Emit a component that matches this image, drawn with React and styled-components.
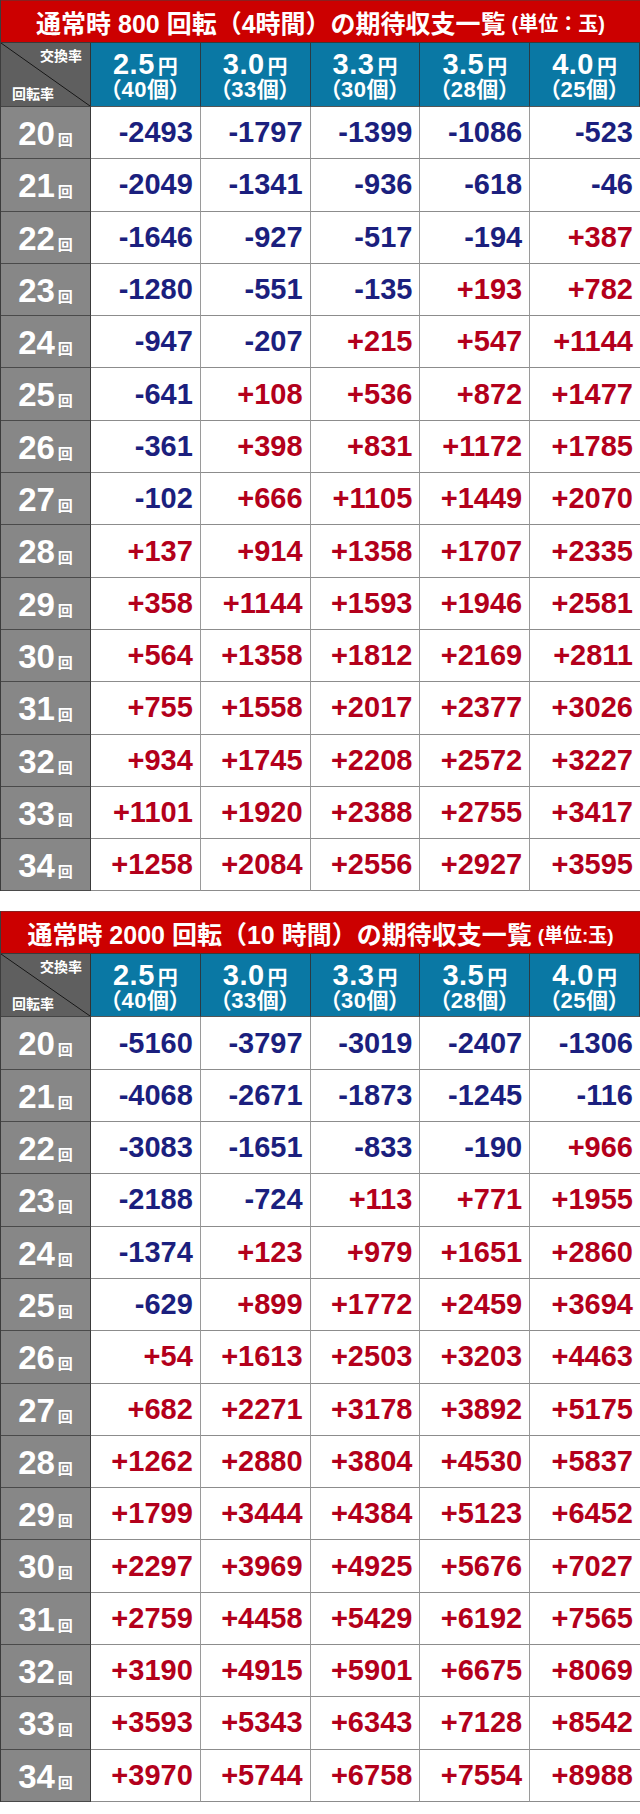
import React from "react";
import styled, { createGlobalStyle } from "styled-components";

const Global = createGlobalStyle`
  html, body { margin: 0; padding: 0; background: #ffffff; }
  body { font-family: "Liberation Sans", "Noto Sans CJK JP", sans-serif; }
  * { box-sizing: border-box; }
`;

const Page = styled.div`
  width: 640px;
  display: flex;
  flex-direction: column;
  gap: 20px;
  padding-bottom: 12px;
`;

const Block = styled.section`
  display: flex;
  flex-direction: column;
  border-left: 1px solid #3c3c3c;
`;

const Title = styled.div`
  height: 43px;
  background: #cc0000;
  border-top: 1px solid #8a2020;
  border-bottom: 1px solid #3a3a3a;
  display: flex;
  align-items: center;
  justify-content: center;
  padding-top: 1px;
  color: #ffffff;
  font-family: "Liberation Sans", "Noto Sans CJK JP", sans-serif;
  font-weight: 700;
  white-space: nowrap;
`;

const TitleMain = styled.span`
  font-size: 25px;
`;

const TitleUnit = styled.span`
  font-size: ${(p) => (p.$small ? 19 : 20)}px;
  margin-left: 6px;
`;

const Grid = styled.div`
  display: grid;
  grid-template-columns: 90px repeat(5, 1fr);
  grid-template-rows: ${(p) => p.$head}px;
  grid-auto-rows: 52.3px;
`;

const Corner = styled.div`
  background: linear-gradient(
    to top right,
    #5f5f5f calc(50% - 0.8px),
    #151515 50%,
    #5f5f5f calc(50% + 0.8px)
  );
  border-bottom: 1px solid #444;
  border-right: 1px solid #333;
  display: flex;
  flex-direction: column;
  justify-content: space-between;
  padding: 3px 8px 4px 11px;
  color: #ffffff;
  font-family: "Noto Sans CJK JP", sans-serif;
  font-weight: 700;
  font-size: 14px;
  line-height: 18px;
`;

const CornerTop = styled.span`
  align-self: flex-end;
`;

const CornerBottom = styled.span`
  align-self: flex-start;
`;

const HeadCell = styled.div`
  background: #0a78a4;
  border-right: 1px solid #2b3a44;
  border-bottom: 1px solid #555;
  display: flex;
  flex-direction: column;
  align-items: center;
  justify-content: center;
  color: #ffffff;
  font-weight: 700;
  padding-top: 5px;
  &:last-child { border-right: none; }
`;

const RateLine = styled.div`
  display: flex;
  align-items: baseline;
  line-height: 25px;
`;

const Rate = styled.span`
  font-family: "Liberation Sans", sans-serif;
  font-size: 29px;
  letter-spacing: 0.5px;
`;

const Yen = styled.span`
  font-family: "Noto Sans CJK JP", sans-serif;
  font-size: 20px;
  margin-left: 3px;
`;

const Count = styled.div`
  font-family: "Liberation Sans", "Noto Sans CJK JP", sans-serif;
  font-feature-settings: "palt";
  font-size: 22px;
  line-height: 24px;
  letter-spacing: 0.5px;
`;

const RowHead = styled.div`
  background: #878787;
  border-bottom: 1px solid #4a4a4a;
  border-right: 1px solid #3a3a3a;
  display: flex;
  align-items: baseline;
  justify-content: center;
  padding-top: 9px;
  color: #ffffff;
  font-weight: 700;
`;

const Spins = styled.span`
  font-family: "Liberation Sans", sans-serif;
  font-size: 33px;
  line-height: 36px;
`;

const Kai = styled.span`
  font-family: "Noto Sans CJK JP", sans-serif;
  font-size: 15px;
  margin-left: 3px;
`;

const Value = styled.div`
  background: #ffffff;
  border-bottom: 1px solid #8c8c8c;
  border-right: 1px solid #9a9a9a;
  display: flex;
  align-items: center;
  justify-content: flex-end;
  padding-right: 7px;
  font-family: "Liberation Sans", sans-serif;
  font-weight: 700;
  font-size: 29px;
  color: ${(p) => (p.$plus ? "#b3001b" : "#1b1f7e")};
  &:nth-child(6n) { border-right: none; }
`;

const rates = [
  ["2.5", "（40個）"],
  ["3.0", "（33個）"],
  ["3.3", "（30個）"],
  ["3.5", "（28個）"],
  ["4.0", "（25個）"],
];

const table800 = [
  ["-2493", "-1797", "-1399", "-1086", "-523"],
  ["-2049", "-1341", "-936", "-618", "-46"],
  ["-1646", "-927", "-517", "-194", "+387"],
  ["-1280", "-551", "-135", "+193", "+782"],
  ["-947", "-207", "+215", "+547", "+1144"],
  ["-641", "+108", "+536", "+872", "+1477"],
  ["-361", "+398", "+831", "+1172", "+1785"],
  ["-102", "+666", "+1105", "+1449", "+2070"],
  ["+137", "+914", "+1358", "+1707", "+2335"],
  ["+358", "+1144", "+1593", "+1946", "+2581"],
  ["+564", "+1358", "+1812", "+2169", "+2811"],
  ["+755", "+1558", "+2017", "+2377", "+3026"],
  ["+934", "+1745", "+2208", "+2572", "+3227"],
  ["+1101", "+1920", "+2388", "+2755", "+3417"],
  ["+1258", "+2084", "+2556", "+2927", "+3595"],
];

const table2000 = [
  ["-5160", "-3797", "-3019", "-2407", "-1306"],
  ["-4068", "-2671", "-1873", "-1245", "-116"],
  ["-3083", "-1651", "-833", "-190", "+966"],
  ["-2188", "-724", "+113", "+771", "+1955"],
  ["-1374", "+123", "+979", "+1651", "+2860"],
  ["-629", "+899", "+1772", "+2459", "+3694"],
  ["+54", "+1613", "+2503", "+3203", "+4463"],
  ["+682", "+2271", "+3178", "+3892", "+5175"],
  ["+1262", "+2880", "+3804", "+4530", "+5837"],
  ["+1799", "+3444", "+4384", "+5123", "+6452"],
  ["+2297", "+3969", "+4925", "+5676", "+7027"],
  ["+2759", "+4458", "+5429", "+6192", "+7565"],
  ["+3190", "+4915", "+5901", "+6675", "+8069"],
  ["+3593", "+5343", "+6343", "+7128", "+8542"],
  ["+3970", "+5744", "+6758", "+7554", "+8988"],
];

function ExpectTable({ title, unit, rows, head, smallUnit }) {
  return (
    <Block>
      <Title>
        <TitleMain>{title}</TitleMain>
        <TitleUnit $small={smallUnit}>{unit}</TitleUnit>
      </Title>
      <Grid $head={head}>
        <Corner>
          <CornerTop>交換率</CornerTop>
          <CornerBottom>回転率</CornerBottom>
        </Corner>
        {rates.map(([r, c]) => (
          <HeadCell key={r}>
            <RateLine>
              <Rate>{r}</Rate>
              <Yen>円</Yen>
            </RateLine>
            <Count>{c}</Count>
          </HeadCell>
        ))}
        {rows.map((row, i) => (
          <React.Fragment key={i}>
            <RowHead>
              <Spins>{20 + i}</Spins>
              <Kai>回</Kai>
            </RowHead>
            {row.map((v, j) => (
              <Value key={j} $plus={v.startsWith("+")}>
                {v}
              </Value>
            ))}
          </React.Fragment>
        ))}
      </Grid>
    </Block>
  );
}

export default function App() {
  return (
    <>
      <Global />
      <Page>
        <ExpectTable
          title="通常時 800 回転（4時間）の期待収支一覧"
          unit="(単位：玉)"
          rows={table800}
          head={64}
        />
        <ExpectTable
          title="通常時 2000 回転（10 時間）の期待収支一覧"
          unit="(単位:玉)"
          rows={table2000}
          head={63}
          smallUnit
        />
      </Page>
    </>
  );
}
